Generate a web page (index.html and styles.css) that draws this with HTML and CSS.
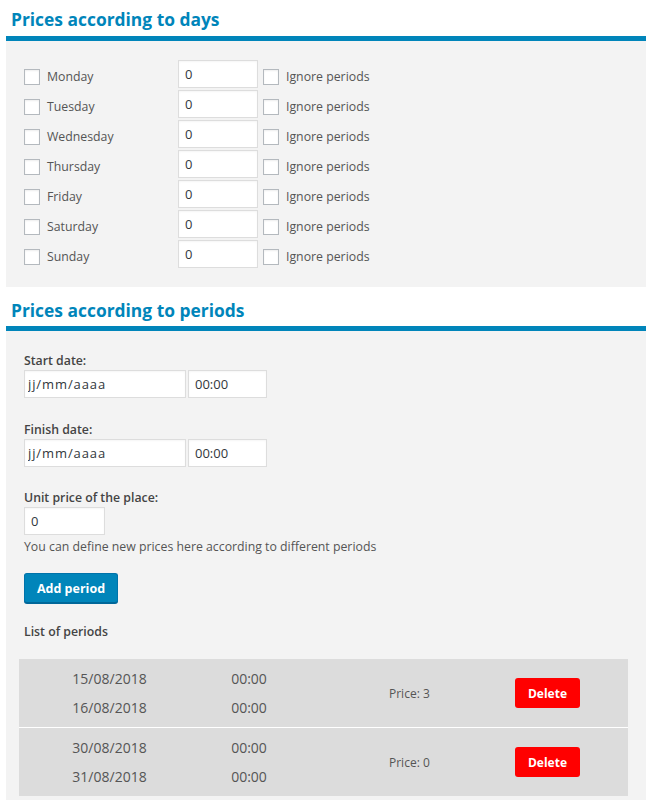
FILE: index.html
```html
<!DOCTYPE html>
<html>
<head>
<meta charset="utf-8">
<link rel="stylesheet" href="styles.css">
</head>
<body>
<h2 class="sec-title">Prices according to days</h2>
<div class="panel days">
  <div class="day-row"><label class="chk"><span class="box"></span>Monday</label><input class="num" value="0"><label class="chk ign"><span class="box"></span>Ignore periods</label></div>
  <div class="day-row"><label class="chk"><span class="box"></span>Tuesday</label><input class="num" value="0"><label class="chk ign"><span class="box"></span>Ignore periods</label></div>
  <div class="day-row"><label class="chk"><span class="box"></span>Wednesday</label><input class="num" value="0"><label class="chk ign"><span class="box"></span>Ignore periods</label></div>
  <div class="day-row"><label class="chk"><span class="box"></span>Thursday</label><input class="num" value="0"><label class="chk ign"><span class="box"></span>Ignore periods</label></div>
  <div class="day-row"><label class="chk"><span class="box"></span>Friday</label><input class="num" value="0"><label class="chk ign"><span class="box"></span>Ignore periods</label></div>
  <div class="day-row"><label class="chk"><span class="box"></span>Saturday</label><input class="num" value="0"><label class="chk ign"><span class="box"></span>Ignore periods</label></div>
  <div class="day-row"><label class="chk"><span class="box"></span>Sunday</label><input class="num" value="0"><label class="chk ign"><span class="box"></span>Ignore periods</label></div>
</div>

<h2 class="sec-title second">Prices according to periods</h2>
<div class="panel periods">
  <div class="field">
    <div class="flabel">Start date:</div>
    <div class="inputs"><input class="date" value="jj/mm/aaaa"><input class="time" value="00:00"></div>
  </div>
  <div class="field">
    <div class="flabel">Finish date:</div>
    <div class="inputs"><input class="date" value="jj/mm/aaaa"><input class="time" value="00:00"></div>
  </div>
  <div class="field last">
    <div class="flabel">Unit price of the place:</div>
    <div class="inputs"><input class="price" value="0"></div>
    <div class="help">You can define new prices here according to different periods</div>
  </div>
  <button class="add-btn">Add period</button>
  <div class="list-title">List of periods</div>
  <div class="plist">
    <div class="prow">
      <div class="c-date"><div>15/08/2018</div><div>16/08/2018</div></div>
      <div class="c-time"><div>00:00</div><div>00:00</div></div>
      <div class="c-price">Price: 3</div>
      <div class="c-act"><button class="del-btn">Delete</button></div>
    </div>
    <div class="prow">
      <div class="c-date"><div>30/08/2018</div><div>31/08/2018</div></div>
      <div class="c-time"><div>00:00</div><div>00:00</div></div>
      <div class="c-price">Price: 0</div>
      <div class="c-act"><button class="del-btn">Delete</button></div>
    </div>
  </div>
</div>
</body>
</html>
```

FILE: styles.css
```css
html, body {
  margin: 0;
  padding: 0;
  background: #fff;
}
body {
  padding: 0 7px 0 6px;
  font-family: "Open Sans", "Noto Sans", sans-serif;
  font-size: 12.3px;
  color: #444;
}
.sec-title {
  margin: 0;
  padding: 7px 0 0 5px;
  height: 29px;
  font-size: 17.4px;
  font-weight: 700;
  color: #0085ba;
  line-height: 24px;
  border-bottom: 5px solid #0085ba;
}
.sec-title.second {
  padding-top: 0;
  margin-top: 5px;
  height: 34px;
  line-height: 36px;
}
.panel {
  background: #f3f3f3;
}
.days {
  padding: 19px 0 17px 18px;
}
.day-row {
  display: flex;
  align-items: center;
  height: 30px;
}
.chk {
  display: flex;
  align-items: center;
  color: #555;
  width: 154px;
  margin-top: 3px;
}
.chk.ign {
  width: auto;
  margin-left: 5px;
}
.box {
  display: inline-block;
  width: 14px;
  height: 14px;
  border: 1px solid #b4b9be;
  background: #fff;
  margin-right: 7px;
  box-shadow: inset 0 1px 2px rgba(0,0,0,0.07);
}
input {
  font-family: inherit;
  font-size: 13px;
  color: #32373c;
  box-sizing: border-box;
  height: 28px;
  border: 1px solid #ddd;
  background: #fff;
  padding: 0 6px;
  margin: 0;
  outline: none;
  box-shadow: inset 0 1px 2px rgba(0,0,0,0.04);
}
.num {
  width: 80px;
  margin-top: -2px;
}
.periods {
  padding: 21px 0 4px 18px;
}
.field {
  margin-bottom: 23px;
}
.field + .field {
  margin-bottom: 22px;
}
.flabel {
  font-weight: 600;
  color: #444;
  line-height: 18px;
}
.inputs {
  display: flex;
  gap: 2px;
}
.date {
  width: 162px;
  padding-left: 3px;
  letter-spacing: 0.9px;
}
.time { width: 79px; }
.price { width: 81px; }
.help {
  color: #555;
  margin-top: 1px;
  line-height: 21px;
}
.field.last { margin-bottom: 16px; }
.add-btn {
  font-family: inherit;
  font-size: 12.5px;
  font-weight: 700;
  color: #fff;
  background: #0085ba;
  border: 1px solid #0073aa;
  border-bottom-color: #006799;
  border-radius: 3px;
  box-shadow: 0 1px 0 #006799;
  width: 94px;
  height: 30px;
  padding: 0;
  cursor: pointer;
  display: block;
}
.list-title {
  font-weight: 600;
  color: #444;
  margin-top: 19px;
  line-height: 20px;
}
.plist {
  margin: 17px 18px 0 -5px;
  background: #fff;
}
.prow {
  display: grid;
  grid-template-columns: 181px 98px 184px 131px;
  background: #dcdcdc;
  height: 68px;
  align-items: center;
  color: #555;
}
.prow + .prow {
  margin-top: 1px;
}
.c-date, .c-time {
  text-align: center;
  line-height: 29px;
  font-size: 14px;
}
.c-price {
  padding-left: 91px;
  font-size: 12px;
}
.c-act {
  text-align: center;
}
.del-btn {
  font-family: inherit;
  font-size: 12px;
  font-weight: 700;
  color: #fff;
  background: #ff0000;
  border: none;
  border-radius: 3px;
  width: 65px;
  height: 30px;
  padding: 0;
}
```
